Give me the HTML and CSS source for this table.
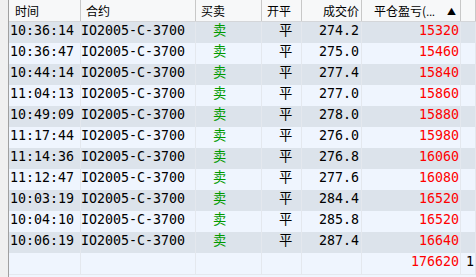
FILE: index.html
```html
<!DOCTYPE html>
<html lang="zh-CN">
<head>
<meta charset="utf-8">
<link rel="stylesheet" href="styles.css">
</head>
<body>
<div class="wrap">
  <div class="gutter"></div>
  <div class="grid">
    <div class="row head">
      <div class="c l">时间</div>
      <div class="c l">合约</div>
      <div class="c l">买卖</div>
      <div class="c l">开平</div>
      <div class="c r">成交价</div>
      <div class="c pl"><span>平仓盈亏(<span class="dots">...</span></span><span class="sort">▲</span></div>
      <div class="c"></div>
    </div>
    <div class="row odd"><div class="c t">10:36:14</div><div class="c k">IO2005-C-3700</div><div class="c bs">卖</div><div class="c oc">平</div><div class="c px">274.2</div><div class="c pnl">15320</div><div class="c"></div></div>
    <div class="row even"><div class="c t">10:36:47</div><div class="c k">IO2005-C-3700</div><div class="c bs">卖</div><div class="c oc">平</div><div class="c px">275.0</div><div class="c pnl">15460</div><div class="c"></div></div>
    <div class="row odd"><div class="c t">10:44:14</div><div class="c k">IO2005-C-3700</div><div class="c bs">卖</div><div class="c oc">平</div><div class="c px">277.4</div><div class="c pnl">15840</div><div class="c"></div></div>
    <div class="row even"><div class="c t">11:04:13</div><div class="c k">IO2005-C-3700</div><div class="c bs">卖</div><div class="c oc">平</div><div class="c px">277.0</div><div class="c pnl">15860</div><div class="c"></div></div>
    <div class="row odd"><div class="c t">10:49:09</div><div class="c k">IO2005-C-3700</div><div class="c bs">卖</div><div class="c oc">平</div><div class="c px">278.0</div><div class="c pnl">15880</div><div class="c"></div></div>
    <div class="row even"><div class="c t">11:17:44</div><div class="c k">IO2005-C-3700</div><div class="c bs">卖</div><div class="c oc">平</div><div class="c px">276.0</div><div class="c pnl">15980</div><div class="c"></div></div>
    <div class="row odd"><div class="c t">11:14:36</div><div class="c k">IO2005-C-3700</div><div class="c bs">卖</div><div class="c oc">平</div><div class="c px">276.8</div><div class="c pnl">16060</div><div class="c"></div></div>
    <div class="row even"><div class="c t">11:12:47</div><div class="c k">IO2005-C-3700</div><div class="c bs">卖</div><div class="c oc">平</div><div class="c px">277.6</div><div class="c pnl">16080</div><div class="c"></div></div>
    <div class="row odd"><div class="c t">10:03:19</div><div class="c k">IO2005-C-3700</div><div class="c bs">卖</div><div class="c oc">平</div><div class="c px">284.4</div><div class="c pnl">16520</div><div class="c"></div></div>
    <div class="row even"><div class="c t">10:04:10</div><div class="c k">IO2005-C-3700</div><div class="c bs">卖</div><div class="c oc">平</div><div class="c px">285.8</div><div class="c pnl">16520</div><div class="c"></div></div>
    <div class="row odd"><div class="c t">10:06:19</div><div class="c k">IO2005-C-3700</div><div class="c bs">卖</div><div class="c oc">平</div><div class="c px">287.4</div><div class="c pnl">16640</div><div class="c"></div></div>
    <div class="row total"><div class="c"></div><div class="c"></div><div class="c"></div><div class="c"></div><div class="c"></div><div class="c pnl">176620</div><div class="c extra">1</div></div>
  </div>
</div>
</body>
</html>
```

FILE: styles.css
```css
html, body {
  margin: 0;
  padding: 0;
  background: #eff5fe;
  overflow: hidden;
}
.wrap {
  display: flex;
  height: 277px;
}
.gutter {
  width: 8px;
  flex: none;
  background: #f0f0f0;
  border-right: 1px solid #a0a0a0;
}
.grid {
  flex: 1;
  min-width: 0;
  display: flex;
  flex-direction: column;
  background: #eff5fe;
}
.row {
  display: grid;
  grid-template-columns: 72px 115px 66px 40px 60px 99px 1fr;
  height: 21px;
  flex: none;
  font-family: "DejaVu Sans Mono", "Noto Sans CJK SC", monospace;
  font-size: 13.3px;
  color: #000;
}
.c {
  border-right: 1px solid #e4e8ee;
  overflow: hidden;
  white-space: nowrap;
  display: flex;
  align-items: center;
  padding-bottom: 3px;
  box-sizing: border-box;
  line-height: 1;
}
.head {
  height: 22px;
  background: #f7f8f9;
  border-bottom: 1px solid #d4d6d9;
  box-sizing: border-box;
  font-family: "Noto Sans CJK SC", sans-serif;
  font-size: 12px;
}
.head .c {
  border-right: 1px solid #c8c8c8;
  padding-bottom: 0;
  padding-top: 1px;
}
.head .l { padding-left: 5px; }
.head .c:first-child { padding-left: 6px; }
.head .r { justify-content: flex-end; padding-right: 2px; }
.head .pl {
  justify-content: space-between;
  padding-left: 12px;
  padding-right: 4px;
}
.dots { font-family: "Liberation Sans", sans-serif; letter-spacing: -0.5px; }
.sort { font-size: 9px; }
.odd { background: #dce3eb; }
.even { background: #eff5fe; }
.total {
  height: 22px;
  background: #eff5fe;
  border-bottom: 1px solid #e4e8ee;
  box-sizing: border-box;
}
.t { padding-left: 1px; }
.k { padding-left: 0; }
.bs { color: #009a00; padding-left: 17px; }
.oc { padding-left: 17px; }
.px { justify-content: flex-end; padding-right: 2px; }
.pnl { justify-content: flex-end; padding-right: 1px; color: #ff0000; }
.extra { padding-left: 5px; color: #000; }
```
